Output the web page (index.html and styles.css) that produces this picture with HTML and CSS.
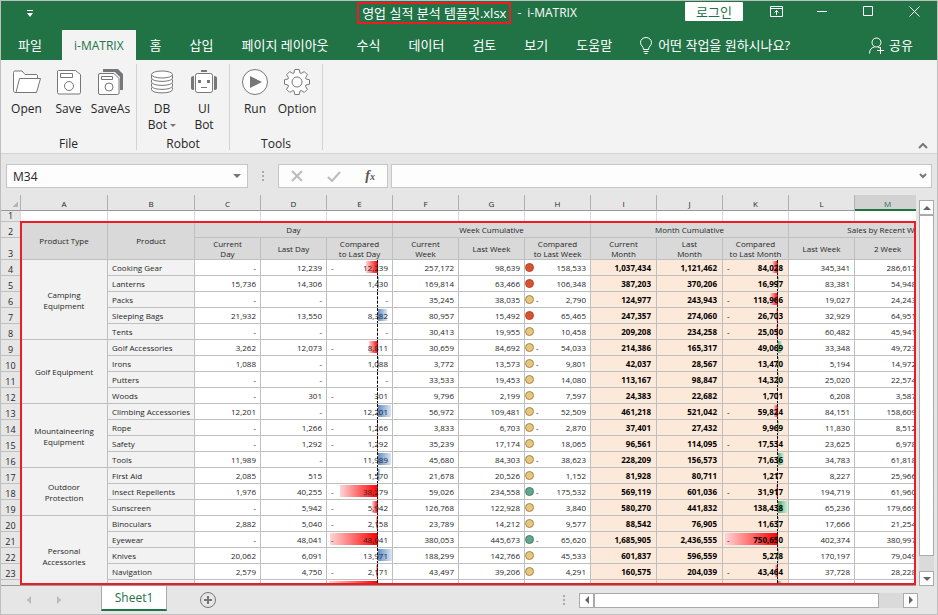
FILE: index.html
```html
<!DOCTYPE html>
<html lang="ko">
	<head>
		<meta charset="utf-8">
		<meta name="viewport" content="width=device-width, initial-scale=1">
		<title>영업 실적 분석 템플릿.xlsx - i-MATRIX</title>
		<link rel="stylesheet" href="styles.css">
	</head>
	<body>
		<!-- title bar -->
		<header class="titlebar">
			<button class="quick-access" title="Quick access">
				<svg width="6" height="7" viewBox="0 0 6 7"><path d="M0 .5h6" stroke="#fff"/><path d="M0 3h6L3 7z" fill="#fff"/></svg>
			</button>
			<h1 class="title"><span class="title-file">영업 실적 분석 템플릿.xlsx</span><span>-</span><span>i-MATRIX</span></h1>
			<button class="login">로그인</button>
			<div class="window-buttons">
				<button title="Ribbon options"><svg width="13" height="11" viewBox="0 0 13 11"><path d="M.5 .5h12v10H.5zM.5 2.500h12M6.500 9V4.500M4.500 6.500l2-2 2 2"/></svg></button>
				<button title="Minimize"><svg width="11" height="11" viewBox="0 0 11 11"><path d="M0 5.500h10"/></svg></button>
				<button title="Maximize"><svg width="11" height="11" viewBox="0 0 11 11"><path d="M.5 .5h9v9h-9z"/></svg></button>
				<button title="Close"><svg width="11" height="11" viewBox="0 0 11 11"><path d="M.5 .5l10 10M10.500 .5l-10 10"/></svg></button>
			</div>
		</header>

		<!-- tabs -->
		<nav class="tabs">
			<a href="#" class="tab tab-file">파일</a>
			<a href="#" class="tab tab-active">i-MATRIX</a>
			<a href="#" class="tab">홈</a>
			<a href="#" class="tab">삽입</a>
			<a href="#" class="tab">페이지 레이아웃</a>
			<a href="#" class="tab">수식</a>
			<a href="#" class="tab">데이터</a>
			<a href="#" class="tab">검토</a>
			<a href="#" class="tab">보기</a>
			<a href="#" class="tab">도움말</a>
			<a href="#" class="tab tab-tell">
				<svg width="12" height="17" viewBox="0 0 12 17"><path d="M3.500 12.500c0-3-3-4-3-7a5.500 5 0 0 1 11 0c0 3-3 4-3 7zM3.500 14.500h5M4.500 16.500h3"/></svg>
				어떤 작업을 원하시나요?
			</a>
			<a href="#" class="tab tab-share">
				<svg width="16" height="17" viewBox="0 0 16 17"><circle cx="7.500" cy="5.500" r="4.500"/><path d="M.5 16.500c0-4 2-6 5-6.500M9 10l2 1M8 13.500h7M11.500 10v7"/></svg>
				공유
			</a>
		</nav>

		<!-- ribbon -->
		<section class="ribbon">
			<div class="group group-file">
				<div class="tools">
					<button class="tool">
						<svg width="28" height="28" viewBox="0 0 28 28"><path class="sheet" d="M3 24.500C1.500 24.500 .5 24 .5 22.500V4.500c0-1 .5-1.500 1.500-1.500h7l3 3.500h11c1 0 1.500.5 1.500 1.500v2.500"/><path class="sheet" d="M6.500 10.500h21l-4 14H3z"/></svg>
						Open
					</button>
					<button class="tool">
						<svg width="28" height="28" viewBox="0 0 28 28"><path class="sheet" d="M3.500 2.500h17l5 4v18q0 1.500-1.500 1.500h-20q-1.500 0-1.500-1.500v-20.500q0-1.500 1-1.500z"/><path d="M5.500 5.500h12v4h-12z"/><circle cx="14" cy="18" r="4.500"/></svg>
						Save
					</button>
					<button class="tool">
						<svg width="28" height="28" viewBox="0 0 28 28"><path class="solid" d="M6 1h15l5 5v16h-3V9l-5-5H6z"/><path class="sheet" d="M3 5.500h14l5 5v14.500q0 1.500-1.500 1.500H3q-1.500 0-1.500-1.500V7q0-1.500 1.500-1.500z"/><path d="M4.500 8.500h11v3h-11z"/><circle cx="12" cy="19" r="4"/></svg>
						SaveAs
					</button>
				</div>
				<div class="group-name">File</div>
			</div>
			<div class="group group-robot">
				<div class="tools">
					<button class="tool">
						<svg width="28" height="28" viewBox="0 0 28 28"><g class="sheet"><path d="M3.500 19.500v2c0 4.500 21 4.500 21 0v-2"/><path d="M3.500 15.500v2.500c0 4.500 21 4.500 21 0v-2.500"/><path d="M3.500 11.500v2.500c0 4.500 21 4.500 21 0v-2.500"/><path d="M3.500 7v3c0 4.500 21 4.500 21 0V7"/><ellipse cx="14" cy="6.500" rx="10.500" ry="3.500"/></g></svg>
						<span>DB<br>Bot <i class="caret"></i></span>
					</button>
					<button class="tool">
						<svg width="28" height="28" viewBox="0 0 28 28"><path class="solid" d="M11 2h6v2h-6zM1 10q0-2 3-2v14q-3 0-3-2zM27 10q0-2-3-2v14q3 0 3-2z"/><rect class="sheet" x="5.500" y="5.500" width="17" height="19" rx="2"/><path class="solid" d="M8 12h3v3H8zM17 12h3v3h-3z"/><path d="M11 19.500h6"/></svg>
						<span>UI<br>Bot</span>
					</button>
				</div>
				<div class="group-name">Robot</div>
			</div>
			<div class="group group-tools">
				<div class="tools">
					<button class="tool">
						<svg width="28" height="28" viewBox="0 0 28 28"><circle class="sheet" cx="14" cy="14" r="12.500"/><path class="solid" d="M9 8l12 6-12 6z"/></svg>
						Run
					</button>
					<button class="tool">
						<svg width="28" height="28" viewBox="0 0 28 28"><path class="sheet" d="M11 5l.8-3.500h4.400L17 5l1.200.5 3.100-1.900 3.100 3.100-1.900 3.100.5 1.200 3.500.8v4.400L23 17l-.5 1.200 1.900 3.100-3.100 3.100-3.100-1.900-1.200.5-.8 3.500h-4.400L11 23l-1.200-.5-3.100 1.900-3.100-3.100 1.900-3.100L5 17l-3.500-.8v-4.400L5 11l.5-1.200-1.900-3.100 3.100-3.100 3.100 1.900z"/><circle cx="14" cy="14" r="5"/></svg>
						Option
					</button>
				</div>
				<div class="group-name">Tools</div>
			</div>
			<button class="collapse" title="Collapse"><svg width="10" height="6" viewBox="0 0 10 6"><path d="M1 5l4-4 4 4"/></svg></button>
		</section>

		<!-- formula bar -->
		<section class="formula">
			<label class="namebox">
				<input type="text" value="M34" aria-label="Name box">
				<i class="caret"></i>
			</label>
			<span class="dots"></span>
			<div class="formula-buttons">
				<button title="Cancel"><svg width="12" height="12" viewBox="0 0 12 12"><path d="M1 1l10 10M11 1L1 11" stroke="#bbb" stroke-width="2"/></svg></button>
				<button title="Enter"><svg width="14" height="12" viewBox="0 0 14 12"><path d="M1 7l4 4 8-9" stroke="#bbb" stroke-width="2"/></svg></button>
				<button title="Insert function" class="fx">f<small>x</small></button>
			</div>
			<label class="formula-input">
				<input type="text" value="" aria-label="Formula">
				<svg width="8" height="6" viewBox="0 0 8 6"><path d="M1 1l3 3 3-3" stroke-width="2"/></svg>
			</label>
		</section>

		<!-- sheet -->
		<main class="sheet-area">
			<div class="grid">
				<table>
					<colgroup>
						<col class="col-no"><col class="col-name"><col class="col-name">
						<col><col><col><col><col><col><col><col><col><col><col><col>
					</colgroup>
					<thead>
						<tr class="letters">
							<th class="corner"></th><th>A</th><th>B</th><th>C</th><th>D</th><th>E</th><th>F</th><th>G</th><th>H</th><th>I</th><th>J</th><th>K</th><th>L</th><th class="selected">M</th><th></th>
						</tr>
						<tr class="blank">
							<th class="no">1</th><td></td><td></td><td></td><td></td><td></td><td></td><td></td><td></td><td></td><td></td><td></td><td></td><td></td><td></td>
						</tr>
						<tr class="heads">
							<th class="no">2</th>
							<th rowspan="2">Product Type</th>
							<th rowspan="2">Product</th>
							<th colspan="3">Day</th>
							<th colspan="3">Week Cumulative</th>
							<th colspan="3">Month Cumulative</th>
							<th colspan="3">Sales by Recent Week</th>
						</tr>
						<tr class="heads heads-sub">
							<th class="no">3</th>
							<th>Current<br>Day</th><th>Last Day</th><th>Compared<br>to Last Day</th>
							<th>Current<br>Week</th><th>Last Week</th><th>Compared<br>to Last Week</th>
							<th>Current<br>Month</th><th>Last<br>Month</th><th>Compared<br>to Last Month</th>
							<th>Last Week</th><th>2 Week</th><th></th>
						</tr>
					</thead>
					<tbody id="rows"></tbody>
				</table>
				<div class="outline"></div>
			</div>
			<div class="vscroll">
				<button title="Up"><i class="arrow arrow-up"></i></button>
				<div class="thumb"></div>
				<button title="Down"><i class="arrow arrow-down"></i></button>
			</div>
		</main>

		<!-- sheet tabs -->
		<footer class="bottom">
			<button class="nav-arrow" title="Previous"><i class="arrow arrow-left"></i></button>
			<button class="nav-arrow" title="Next"><i class="arrow arrow-right"></i></button>
			<a href="#" class="sheet-tab">Sheet1</a>
			<button class="add" title="New sheet"><svg width="16" height="16" viewBox="0 0 16 16"><circle cx="8" cy="8" r="7.500"/><path d="M4 8h8M8 4v8" stroke-width="2"/></svg></button>
			<span class="dots"></span>
			<div class="hscroll">
				<button title="Left"><i class="arrow arrow-left"></i></button>
				<div class="thumb"></div>
				<button title="Right"><i class="arrow arrow-right"></i></button>
			</div>
		</footer>
		<script src="sheet.js"></script>
	</body>
</html>
```
FILE: styles.css
```css
* {
	box-sizing: border-box;
}
body {
	margin: 0;
	height: 100vh;
	display: flex;
	flex-direction: column;
	border: 1px solid #bfbfbf;
	background: #e6e6e6;
	color: #262626;
	font-family: "Open Sans", "Noto Sans CJK KR", sans-serif;
	font-size: 12px;
	overflow: hidden;
}
button {
	background: transparent;
	border: 0;
	margin: 0;
	padding: 0;
	color: inherit;
	font: inherit;
}
input {
	border: 0;
	padding: 0;
	background: transparent;
	color: inherit;
	font: inherit;
	min-width: 0;
	flex: 1;
}
a {
	color: inherit;
	text-decoration: none;
}
svg {
	fill: none;
	stroke: #777;
	flex: none;
}

/* title bar */
.titlebar {
	position: relative;
	display: flex;
	align-items: flex-start;
	justify-content: flex-end;
	height: 29px;
	flex: none;
	background: #217346;
	color: #fff;
}
.titlebar svg {
	display: block;
	stroke: #fff;
}
.quick-access {
	margin: 9px auto 0 26px;
}
.quick-access svg {
	stroke: none;
}
.title {
	position: absolute;
	left: 0;
	right: 4px;
	top: 1px;
	display: flex;
	justify-content: center;
	align-items: center;
	gap: 6px;
	margin: 0;
	font-size: 12px;
	font-weight: 400;
	line-height: 18px;
}
.title-file {
	padding: 0 3px;
	border: 2px solid #ed1c24;
	font-size: 13px;
}
.login {
	width: 58px;
	height: 19px;
	margin-top: 1px;
	border-radius: 1px;
	background: #fff;
	color: #217346;
	font-size: 13px;
	line-height: 18px;
}
.window-buttons {
	display: flex;
	margin-left: 10px;
	margin-top: 4px;
}
.window-buttons button {
	width: 46px;
	height: 13px;
	display: flex;
	align-items: center;
	justify-content: center;
}

/* tabs */
.tabs {
	display: flex;
	height: 30px;
	flex: none;
	background: #217346;
	color: #fff;
	font-size: 13px;
	line-height: 27px;
}
.tab {
	display: flex;
	align-items: center;
	gap: 6px;
	padding: 0 14px;
	white-space: nowrap;
}
.tab svg {
	stroke: #fff;
}
.tab-file {
	width: 61px;
	padding: 0 0 0 17px;
}
.tab-active {
	background: #f3f3f3;
	color: #217346;
	padding: 0 12px;
	font-size: 12px;
}
.tab-share {
	margin-left: auto;
	padding-right: 24px;
	gap: 4px;
}

/* ribbon */
.ribbon {
	display: flex;
	height: 94px;
	flex: none;
	padding-top: 4px;
	background: #f3f3f3;
	border-bottom: 1px solid #d2d2d2;
}
.ribbon svg {
	stroke: #777679;
}
.ribbon .sheet {
	fill: #fff;
}
.ribbon .solid {
	fill: #777679;
	stroke: none;
}
.group {
	display: flex;
	flex-direction: column;
	justify-content: space-between;
	height: 86px;
	border-right: 1px solid #d2d2d2;
}
.group-file {
	width: 136px;
}
.group-robot, .group-tools {
	width: 93px;
}
.tools {
	display: flex;
	justify-content: center;
}
.tool {
	display: flex;
	flex-direction: column;
	align-items: center;
	gap: 5px;
	width: 42px;
	padding-top: 4px;
	line-height: 16px;
}
.group-name {
	text-align: center;
	line-height: 12px;
}
.caret {
	display: inline-block;
	border: 3px solid transparent;
	border-top: 3px solid #777;
	border-bottom: 0;
	vertical-align: middle;
}
.collapse {
	margin: auto 9px 4px auto;
	line-height: 8px;
}
.collapse svg {
	stroke-width: 2;
}

/* formula bar */
.formula {
	display: flex;
	align-items: center;
	height: 41px;
	flex: none;
	padding: 3px 5px 0;
}
.namebox, .formula-buttons, .formula-input {
	display: flex;
	align-items: center;
	height: 24px;
	border: 1px solid #c6c6c6;
	background: #fdfdfd;
}
.namebox {
	width: 242px;
	padding: 0 6px;
}
.namebox .caret {
	border-width: 4px 4px 0;
}
.dots {
	width: 2px;
	height: 10px;
	margin: 0 14px;
	background: repeating-linear-gradient(#aaa 0 2px, transparent 2px 4px);
}
.formula-buttons {
	width: 110px;
	margin-right: 3px;
	justify-content: space-around;
}
.formula-buttons svg {
	display: block;
}
.fx {
	font: italic bold 14px "Liberation Serif", serif;
	color: #555;
}
.fx small {
	font-size: 10px;
}
.formula-input {
	flex: 1;
	padding: 0 4px;
}

/* sheet */
.sheet-area {
	display: flex;
	flex: 1;
	min-height: 0;
}
.grid {
	position: relative;
	flex: 1;
	min-width: 0;
	overflow: hidden;
	border-bottom: 1px solid #999;
	font-size: 8px;
	line-height: 11px;
}
table {
	width: 986px;
	table-layout: fixed;
	border-collapse: separate;
	border-spacing: 0;
}
col {
	width: 66px;
}
.col-no {
	width: 20px;
}
.col-name {
	width: 87px;
}
th, td {
	height: 16px;
	padding: 0 4px;
	border-right: 1px solid #bfbfbf;
	border-bottom: 1px solid #bfbfbf;
	background: #fff;
	font-weight: 400;
	white-space: nowrap;
	overflow: hidden;
}
.letters th {
	padding-top: 2px;
	background: #e6e6e6;
	border-right-color: #b0b0b0;
	border-bottom-color: #999;
}
.letters .selected {
	background: #d2d2d2;
	color: #217346;
	border-bottom: 2px solid #217346;
}
.letters .corner {
	background: linear-gradient(135deg, transparent 50%, #b4b4b4 50%) 12px 7px / 5px 5px no-repeat #e6e6e6;
}
tr .no {
	padding: 0;
	background: #e6e6e6;
	border-right-color: #999;
	vertical-align: bottom;
	font-size: 9px;
	line-height: 10px;
}
.blank th, .blank td {
	height: 11px;
	line-height: 10px;
	border-right-color: #d9d9d9;
}
.heads th {
	background: #d9d9d9;
}
.heads .no {
	background: #e6e6e6;
}
.heads-sub th {
	height: 22px;
	padding: 0;
	line-height: 10px;
}
.type, .product {
	background: #f2f2f2;
}
.type {
	white-space: normal;
	padding: 0 10px;
}
.product {
	text-align: left;
}
.num {
	text-align: right;
}
.month {
	background: #fde9d9;
	font-weight: 700;
	color: #000;
	padding-right: 5px;
}
.cell {
	position: relative;
	display: flex;
	align-items: center;
	height: 11px;
}
.cell b {
	position: relative;
	margin-left: auto;
	font-weight: inherit;
}
.cell .minus {
	position: relative;
	font-weight: 400;
}
.light {
	width: 9px;
	height: 9px;
	margin: 0 2px 0 -4px;
	border: 1px solid #a58a4b;
	border-radius: 50%;
	background: #eac282;
}
.light.red {
	border-color: #b8432a;
	background: #d9532f;
}
.light.green {
	border-color: #47806c;
	background: #62a48c;
}

/* data bars, drawn either side of a dashed axis */
.bars {
	--axis: 10px;
}
.month.bars {
	--axis: 5px;
}
.axis {
	position: absolute;
	top: -2px;
	bottom: -3px;
	right: var(--axis);
	border-right: 1px dashed #000;
}
.bar {
	position: absolute;
	top: -1px;
	height: 12px;
}
.bar.minus-bar {
	right: var(--axis);
	background: linear-gradient(to left, #f00, #ffd5d5);
}
.bar.plus-bar {
	left: calc(100% - var(--axis));
	background: linear-gradient(to right, #638ec6, #dbe6f4);
}
.month .bar.plus-bar {
	background: linear-gradient(to right, #4fae73, #daf0e1);
}
.outline {
	position: absolute;
	left: 19px;
	top: 26px;
	right: 0;
	bottom: 0;
	border: 2px solid #ed1c24;
}

/* scroll bars */
.arrow {
	display: block;
	border: 4px solid transparent;
}
.arrow-up {
	border-top: 0;
	border-bottom-color: #666;
}
.arrow-down {
	border-bottom: 0;
	border-top-color: #666;
}
.arrow-left {
	border-left: 0;
	border-right-color: #666;
}
.arrow-right {
	border-right: 0;
	border-left-color: #666;
}
.vscroll, .hscroll {
	display: flex;
	background: #dadada;
}
.vscroll {
	flex-direction: column;
	width: 15px;
	margin: 5px 3px 0 3px;
}
.vscroll button, .hscroll button {
	display: flex;
	align-items: center;
	justify-content: center;
	width: 15px;
	height: 15px;
	background: #fff;
	border: 1px solid #aaa;
}
.thumb {
	flex: 1;
	background: #fff;
	border: 1px solid #aaa;
}
.vscroll .thumb {
	margin-bottom: 15px;
}
.hscroll .thumb {
	margin-right: 24px;
}

/* sheet tabs */
.bottom {
	display: flex;
	align-items: center;
	height: 28px;
	flex: none;
}
.nav-arrow {
	margin-left: 26px;
	opacity: .35;
}
.sheet-tab {
	align-self: flex-start;
	width: 66px;
	height: 25px;
	margin-left: 40px;
	border: 1px solid #aaa;
	border-top: 0;
	border-bottom: 2px solid #217346;
	background: #fff;
	color: #217346;
	font-size: 12px;
	line-height: 24px;
	text-align: center;
}
.add {
	margin-left: 33px;
}
.add svg {
	display: block;
}
.bottom .dots {
	margin-left: auto;
}
.hscroll {
	width: 339px;
	margin-right: 19px;
}
```
FILE: sheet.js
```js
// product, C, D, E, F, G, H, light, I, J, K, L, M, E bar, K bar (negative = left of the axis)
const groups = [
	['Camping Equipment', [
		['Cooking Gear', '-', '12,239', '-12,239', '257,172', '98,639', '158,533', 'red', '1,037,434', '1,121,462', '-84,028', '345,341', '286,617', -12, -6],
		['Lanterns', '15,736', '14,306', '1,430', '169,814', '63,466', '106,348', 'red', '387,203', '370,206', '16,997', '83,381', '54,948', 1, 1],
		['Packs', '-', '-', '-', '35,245', '38,035', '-2,790', '', '124,977', '243,943', '-118,966', '19,027', '24,243', 0, -8],
		['Sleeping Bags', '21,932', '13,550', '8,382', '80,957', '15,492', '65,465', 'red', '247,357', '274,060', '-26,703', '32,929', '64,951', 9, -2],
		['Tents', '-', '-', '-', '30,413', '19,955', '10,458', '', '209,208', '234,258', '-25,050', '60,482', '45,941', 0, -2]
	]],
	['Golf Equipment', [
		['Golf Accessories', '3,262', '12,073', '-8,811', '30,659', '84,692', '-54,033', '', '214,386', '165,317', '49,069', '33,348', '49,723', -9, 4],
		['Irons', '1,088', '-', '1,088', '3,772', '13,573', '-9,801', '', '42,037', '28,567', '13,470', '5,194', '14,972', 1, 1],
		['Putters', '-', '-', '-', '33,533', '19,453', '14,080', '', '113,167', '98,847', '14,320', '25,020', '22,574', 0, 1],
		['Woods', '-', '301', '-301', '9,796', '2,199', '7,597', '', '24,383', '22,682', '1,701', '6,208', '3,587', 0, 0]
	]],
	['Mountaineering Equipment', [
		['Climbing Accessories', '12,201', '-', '12,201', '56,972', '109,481', '-52,509', '', '461,218', '521,042', '-59,824', '84,151', '158,609', 13, -4],
		['Rope', '-', '1,266', '-1,266', '3,833', '6,703', '-2,870', '', '37,401', '27,432', '9,969', '11,830', '8,512', -1, 1],
		['Safety', '-', '1,292', '-1,292', '35,239', '17,174', '18,065', '', '96,561', '114,095', '-17,534', '23,625', '6,978', -1, -1],
		['Tools', '11,989', '-', '11,989', '45,680', '84,303', '-38,623', '', '228,209', '156,573', '71,636', '34,783', '61,818', 13, 6]
	]],
	['Outdoor Protection', [
		['First Aid', '2,085', '515', '1,570', '21,678', '20,526', '1,152', '', '81,928', '80,711', '1,217', '8,227', '25,966', 2, 0],
		['Insect Repellents', '1,976', '40,255', '-38,279', '59,026', '234,558', '-175,532', 'green', '569,119', '601,036', '-31,917', '194,719', '61,960', -38, -2],
		['Sunscreen', '-', '5,942', '-5,942', '126,768', '122,928', '3,840', '', '580,270', '441,832', '138,438', '65,236', '179,669', -6, 10]
	]],
	['Personal Accessories', [
		['Binoculars', '2,882', '5,040', '-2,158', '23,789', '14,212', '9,577', '', '88,542', '76,905', '11,637', '17,666', '21,254', -2, 1],
		['Eyewear', '-', '48,041', '-48,041', '380,053', '445,673', '-65,620', 'green', '1,685,905', '2,436,555', '-750,650', '402,374', '380,997', -48, -53],
		['Knives', '20,062', '6,091', '13,971', '188,299', '142,766', '45,533', '', '601,837', '596,559', '5,278', '170,197', '79,049', 14, 1],
		['Navigation', '2,579', '4,750', '-2,171', '43,497', '39,206', '4,291', '', '160,575', '204,039', '-43,464', '37,728', '28,228', -2, -3],
		['', '', '', '', '', '', '', '', '', '', '', '', '', -49, 4]
	]]
];

// accounting format: the minus sign sits at the left of the cell
function amount(value, before) {
	const negative = value.length > 1 && value[0] === '-';
	const sign = negative ? '<span class="minus">-</span>' : '';
	return `<div class="cell">${before}${sign}<b>${negative ? value.slice(1) : value}</b></div>`;
}

function bar(size) {
	const kind = size < 0 ? 'minus-bar' : 'plus-bar';
	return `<i class="bar ${kind}" style="width:${Math.abs(size)}px"></i><i class="axis"></i>`;
}

let no = 4;
let html = '';
for (const [type, products] of groups) {
	products.forEach((p, i) => {
		html += `<tr><th class="no">${no < 24 ? no : ''}</th>`;
		if (i === 0) {
			html += `<th class="type" rowspan="${products.length}">${type}</th>`;
		}
		html += `<th class="product">${p[0]}</th>
			<td class="num">${p[1]}</td><td class="num">${p[2]}</td>
			<td class="num bars">${amount(p[3], bar(p[13]))}</td>
			<td class="num">${p[4]}</td><td class="num">${p[5]}</td>
			<td class="num">${amount(p[6], `<i class="light ${p[7]}"></i>`)}</td>
			<td class="num month">${p[8]}</td><td class="num month">${p[9]}</td>
			<td class="num month bars">${amount(p[10], bar(p[14]))}</td>
			<td class="num">${p[11]}</td><td class="num">${p[12]}</td><td></td></tr>`;
		no++;
	});
}
document.getElementById('rows').innerHTML = html;
```
